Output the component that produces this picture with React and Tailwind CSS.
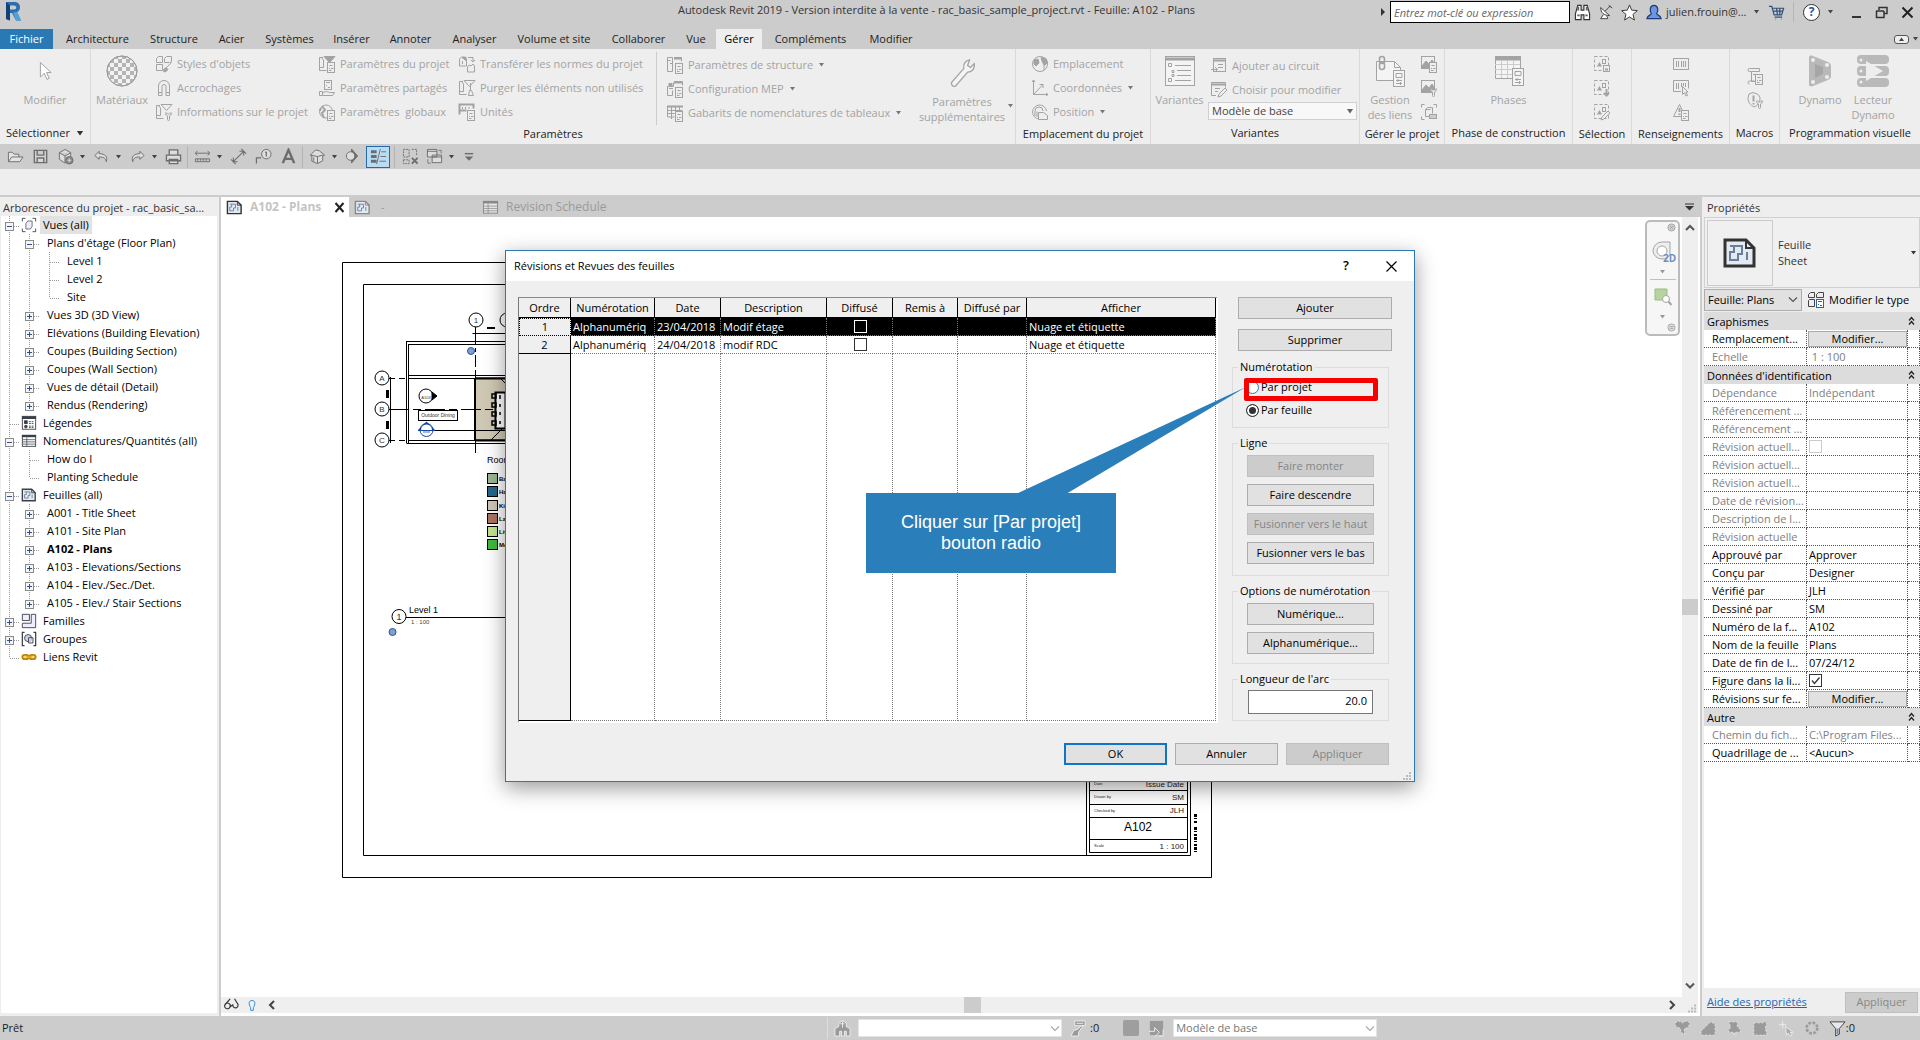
import React from 'react';

/* ---------- small drawing helpers ---------- */

function Svg({ w = 18, h, box = '0 0 18 18', className = '', children }) {
  return (
    <svg width={w} height={h || w} viewBox={box} className={`shrink-0 ${className}`} fill="none" stroke="currentColor" aria-hidden="true">
      {children}
    </svg>
  );
}

function Caret({ className = 'text-[#444]' }) {
  return (
    <svg width="5" height="4" viewBox="0 0 5 4" className={`shrink-0 ${className}`} fill="currentColor" aria-hidden="true">
      <path d="M0 0h5L2.5 3.5z" />
    </svg>
  );
}

function Chevron({ d = 'M1 2.5l4 4 4-4', className = 'text-[#555]', sw = 1.2 }) {
  return (
    <svg width="10" height="10" viewBox="0 0 10 10" className={`shrink-0 ${className}`} fill="none" stroke="currentColor" strokeWidth={sw} aria-hidden="true">
      <path d={d} />
    </svg>
  );
}

// little settings sheet that sits in the corner of many ribbon icons
const corner = (
  <g>
    <rect x="9.5" y="7.5" width="7" height="10" fill="#eee" />
    <path d="M11.5 10.5h3M11 13.5h1M13 13.5h2.500M11 15.500h2.500" />
  </g>
);
const cornerWrench = (
  <path d="M11 9.500a2.500 2.500 0 0 0 1.500 3.500v3.500a1 1 0 0 0 2 0V13A2.500 2.500 0 0 0 16 9.500l-1.500 1.500h-2z" fill="#eee" />
);
const dashedSel = (
  <g>
    <rect x="1.500" y="1.500" width="14" height="14" strokeDasharray="3 2" />
    <path d="M4 11.500l2.500-4.500L9 11.500z" fill="currentColor" stroke="none" />
    <rect x="9.500" y="4.500" width="3" height="4" />
  </g>
);

const ICONS = {
  styles: (
    <g>
      <path d="M1.500 3.500l2-2h4v6h-6zM9.500 3.500l2-2h5v5l-2 1h-5zM1.500 9.500h6v6h-6z" />
      <path d="M16.500 7.500l-6 6M9 17c-1-2 0-4 2-4s3 3-2 4z" fill="currentColor" />
    </g>
  ),
  magnet: <path d="M3.500 16.500V7a5.500 5.500 0 0 1 11 0v9.500h-3.500V7.500a2 2 0 0 0-4 0v9zM3.500 13.500H7M11 13.500h3.500" />,
  info: (
    <g>
      <path d="M5 2.500H1.500v13h7M1.500 12.500H5.500V5l-2-2.500M6 1.500h11l-5.500 6z" />
      {cornerWrench}
    </g>
  ),
  paramProjet: (
    <g>
      <path d="M5 2.500H1.500v13h7M1.500 12.500H5.500V5l-2-2.500" />
      <path d="M6 1.500h11l-5.500 6z" fill="currentColor" />
      {corner}
    </g>
  ),
  shared: (
    <g>
      <rect x="6.500" y="1.500" width="7" height="9" />
      <path d="M8 3.500h4M8 6.500h1M10 8.500h2M1.500 12.500h3v4h-3zM4.500 13.500l4-1 3 1h5l-2 3h-10" />
    </g>
  ),
  global: (
    <g>
      <circle cx="8" cy="8.500" r="6.500" />
      <path d="M4 3l3 4-3 3 2 5M3 5l-1 3" strokeWidth="2" />
      {corner}
    </g>
  ),
  transfer: (
    <g>
      <path d="M1.500 11V4l2-2h4l1 3v6zM4.500 6v3M9.500 17v-5l1.500-2 2 1 2-2 1.500 2v6zM10 2.500h5v4M13 5l2 2 2-2" />
      <path d="M4 2.500h4v3z" fill="currentColor" />
    </g>
  ),
  purge: (
    <g>
      <path d="M5 2.500H1.500v13h7M1.500 12.500H5.500V5l-2-2.500M6 1.500h11l-5.500 6z" />
      <path d="M12.500 4v7M10.500 16.500l1-5h2l2 5z" fill="#eee" />
    </g>
  ),
  units: (
    <g>
      <path d="M1.500 11.500v-10h14v4M1.500 7.500h7" strokeWidth="2" />
      <path d="M4.500 4v2M7.500 4v2M11 4v2" />
      {corner}
    </g>
  ),
  structure: (
    <g>
      <path d="M1.500 1.500h5v14h-5zM1.500 4.500h3M4 7.500h2.500M8 1.500h7.500v4" />
      <path d="M8 2.500h8" strokeWidth="2" />
      {corner}
    </g>
  ),
  mep: (
    <g>
      <path d="M1.500 6.500v9h5v-5M1.500 6.500h6v-4M3 8.500h4M8 1.500h8.500v4" />
      <path d="M8 2.500h8M3.500 3v3M5.500 3v3" strokeWidth="2" />
      {corner}
    </g>
  ),
  schedule: (
    <g>
      <path d="M1 2.500h16" strokeWidth="2" />
      <path d="M1.500 2v11h7M1.500 6.500h15M1.500 9.500h7M5.500 2v13M9.500 2v5M13.500 2v5" />
      {corner}
    </g>
  ),
  globe: (
    <g>
      <circle cx="9" cy="9" r="7.500" />
      <path d="M3 5l4-1 1 4-3 3-2-2zM10 2.500l5 1 1.500 4-3 3-2-3z" fill="currentColor" />
      <path d="M13 10v5" />
    </g>
  ),
  axes: <path d="M2.500 1v14.500H17M2.500 15.500L12 5.500M8.500 5.500H12V9M1 3l1.500-2L4 3M15 14l2 1.500-2 1.500" />,
  position: (
    <g>
      <path d="M8 16A7 7 0 1 1 15.500 8M4 13V8a4 4 0 0 1 8 0M6 14V8.500" />
      <path d="M7.500 9.500h5l4 3v4h-9z" fill="#eee" />
    </g>
  ),
  addSet: (
    <g>
      <rect x="3.500" y="1.500" width="12" height="13" />
      <path d="M3 3.500h13" strokeWidth="2" />
      <path d="M8 7.500h5M8 10.500h5M1 12.500h6M5 10l2.500 2.500L5 15" />
    </g>
  ),
  pickEdit: (
    <g>
      <path d="M6 14.500H1.500v-13h14v5M5 7.500h5M5 10.500h3" />
      <path d="M1 3.500h15" strokeWidth="2" />
      <path d="M8 16l1-3 6-6 2 2-6 6z" fill="#eee" />
    </g>
  ),
  image: (
    <g>
      <rect x="1.500" y="1.500" width="13" height="12" />
      <path d="M2 11l4-5 3 3 3-4 2 3v5H2z" fill="currentColor" />
      {corner}
    </g>
  ),
  imageWrench: (
    <g>
      <rect x="1.500" y="1.500" width="13" height="12" />
      <path d="M2 11l4-5 3 3 3-4 2 3v5H2z" fill="currentColor" />
      {cornerWrench}
    </g>
  ),
  frame: (
    <g>
      <path d="M4.500 1.500h-3v3M13.500 1.500h3v3M1.500 13.500v3h3M5.500 6.500l2-2h5v6M5.500 6.500v7h4M5.500 6.500h5" />
      <rect x="9.500" y="11.500" width="7" height="4" fill="#ccc" />
    </g>
  ),
  selSave: (
    <g>
      {dashedSel}
      <rect x="10.500" y="10.500" width="6" height="6" fill="#eee" />
      <path d="M12 14.500h3" strokeWidth="2" />
    </g>
  ),
  selLoad: (
    <g>
      {dashedSel}
      <path d="M13.500 10v6M11 14l2.500 2.500L16 14" strokeWidth="2" />
    </g>
  ),
  selEdit: (
    <g>
      {dashedSel}
      <path d="M8 17l1-3 6-6 2 2-6 6z" fill="#eee" />
    </g>
  ),
  barcode: (
    <g>
      <rect x="1.500" y="3.500" width="15" height="11" />
      <path d="M4.500 6v6M6.500 6v6M9.500 6v6M11.500 6v6M13.500 6v6" />
    </g>
  ),
  barcodePick: (
    <g>
      <path d="M9 12.500H1.500v-11h15v8M4.500 4v6M6.500 4v6M9.500 4v4M11.500 4v3M13.500 4v4" />
      <path d="M10.500 7.500v8l2-2 1.500 3.500 1.500-.500-1.500-3.500h2z" fill="#eee" />
    </g>
  ),
  warning: (
    <g>
      <path d="M1.500 13.500l6-12 6 12z" />
      <path d="M7.500 5v4M7.500 10.500v1.500" strokeWidth="2" />
      {corner}
    </g>
  ),
  macro: (
    <g>
      <path d="M3.500 1.500h10v3h-8v10h4M3.500 1.500a1.500 1.500 0 0 0 0 3h2M3.500 17a1.500 1.500 0 0 1 0-3h5M7 7.500h3" />
      {corner}
    </g>
  ),
  macroSafe: (
    <g>
      <path d="M3 3l4-1.500L11 3c2 1 3 2 3 5 0 4-3 7-6 8-4-2-6-5-6-9z" />
      <path d="M7.500 4.500v6M7.500 12v1.500" strokeWidth="2" />
      {cornerWrench}
    </g>
  ),
  sheet: (
    <g>
      <path d="M1.500 2.500h10.500l4 4v9H1.500z" fill="#e4eaf2" strokeWidth="1.500" />
      <path d="M12 2.500v4h4" />
      <path d="M4 5.500h6v4h-2v3h-4v-4h2v-3M12.500 8.500v4" stroke="#6b7f99" />
    </g>
  ),
  table: (
    <g>
      <rect x="1.500" y="2.500" width="15" height="12.500" fillOpacity=".5" fill="#fff" />
      <path d="M1 3.500h16" strokeWidth="2.500" />
      <path d="M2 7.500h14M2 10h14M2 12.500h14M6.500 5v10" strokeWidth=".8" />
    </g>
  ),
  legend: (
    <g>
      <rect x="1.500" y="1.500" width="15" height="14.500" fill="#fff" />
      <path d="M1 3h16" strokeWidth="3" />
      <rect x="4" y="6.500" width="3" height="3" fill="currentColor" />
      <circle cx="5.500" cy="13" r="1.500" fill="currentColor" />
      <path d="M9 7.500h6M9 9.500h6M9 12.500h6M9 14h6" strokeDasharray="2 1" />
    </g>
  ),
  views: (
    <g>
      <path d="M5 1.500H1.500V5M13 1.500h3.500V5M1.500 13v3.500H5M13 16.500h3.500V13" />
      <path d="M5.500 7.500l2-3h5v6l-2 3h-5z" fill="#eef" stroke="#666" />
    </g>
  ),
  family: (
    <g>
      <path d="M1.500 1.500h8v7h-8zM11.500 1.500h5v15h-15v-5h10z" fill="#eef" />
    </g>
  ),
  group: (
    <g>
      <path d="M4 1.500H1.500v15H4M14 1.500h2.500v15H14" strokeWidth="1.400" />
      <circle cx="8" cy="8" r="4" fill="#cfd6e2" />
      <path d="M8.500 7.500h5v6h-5z" fill="#dfe5ee" fillOpacity=".7" />
    </g>
  ),
  link: (
    <g stroke="#b8860b" strokeWidth="2">
      <rect x="1.500" y="6.500" width="7" height="5" rx="2.500" fill="#f6d66b" />
      <rect x="9.500" y="6.500" width="7" height="5" rx="2.500" fill="#f6d66b" />
      <path d="M6 9h6" stroke="#e0a91e" />
    </g>
  ),
};

function Icon({ name, w = 18, className = '' }) {
  return (
    <Svg w={w} className={className}>
      {ICONS[name]}
    </Svg>
  );
}

/* ---------- title bar and tabs ---------- */

function TitleBar() {
  return (
    <header className="flex h-[29px] items-start bg-[#ccc] text-[#333]">
      <div className="w-[492px] shrink-0 pl-[5px] pt-[2px]">
        <svg width="16" height="19" viewBox="0 0 16 19" aria-label="Revit">
          <path d="M1 0h8c4 0 6 2 6 5.500 0 2.500-1.500 4-3 4.500l4 8.500H11L7 11H5v7.500L1 17z" fill="#2a6fb0" />
          <path d="M5 3.500h4c3 0 3 4 0 4H5z" fill="#ccc" />
          <path d="M1 0l4 3.500v15L1 17z" fill="#143f78" />
          <path d="M8 10.500l3 8h5l-4-8.500z" fill="#4fa3dc" />
        </svg>
      </div>
      <h1 className="min-w-0 flex-1 truncate text-center leading-[20px]">
        Autodesk Revit 2019 - Version interdite à la vente - rac_basic_sample_project.rvt - Feuille: A102 - Plans
      </h1>
      <div className="flex h-[24px] shrink-0 items-center pr-[6px]">
        <svg width="4" height="8" viewBox="0 0 4 8" className="mr-[5px]"><path d="M0 0l4 4-4 4z" fill="#333" /></svg>
        <input
          aria-label="Recherche"
          placeholder="Entrez mot-clé ou expression"
          className="h-[22px] w-[180px] border border-black bg-white px-[3px] italic outline-none placeholder:text-[#666]"
        />
        <button aria-label="Rechercher" className="ml-[4px]">
          <Svg w={17}>
            <path d="M4 1.500h3.500v5h3v-5H14l2.500 9v6h-6v-5h-3v5h-6v-6z" fill="#fff" stroke="#333" strokeWidth="1.200" />
            <path d="M3.500 12h2.500M12 12h2.500M4.500 3v4M13.500 3v4" stroke="#566" strokeWidth="2" />
          </Svg>
        </button>
        <button aria-label="Centre de communication" className="ml-[7px]">
          <Svg w={16}><path d="M3 4c0 6 4 9 10 9zM8 8l6-6M12 1.500l4 3M6 12l-3 4.500h8l-1-3" fill="#fff" stroke="#333" /></Svg>
        </button>
        <button aria-label="Favoris" className="ml-[7px]">
          <Svg w={17}><path d="M9 1l2.300 5.500 6 .500-4.600 4 1.500 6L9 13.700 3.800 17l1.500-6-4.600-4 6-.500z" fill="#fff" stroke="#333" /></Svg>
        </button>
        <button className="ml-[8px] flex items-center">
          <Svg w={16} className="mr-[4px]"><path d="M6 11C4 8 4 1.500 9 1.500S14 8 12 11c0 1.500 4 1 5 5.500H1C2 12 6 12.500 6 11z" fill="#6f94e0" stroke="#1d3c7c" strokeWidth="1.400" /></Svg>
          <span className="w-[88px] text-left">julien.frouin@...</span>
          <Caret />
        </button>
        <button aria-label="App Store" className="ml-[9px]">
          <Svg w={17}><path d="M1 2.500h3l2.500 9h8l2-7H5M7 14h8M8 16h.500M14 16h.500M6 7.500h9M9 5l1 6M12.500 5v6" stroke="#34507c" strokeWidth="1.300" /></Svg>
        </button>
        <span className="ml-[8px] h-[20px] w-px bg-[#b5b5b5]" />
        <button aria-label="Aide" className="ml-[9px] flex items-center gap-[8px]">
          <span className="flex h-[17px] w-[17px] items-center justify-center rounded-full border border-[#333] bg-white text-[12px] font-bold text-[#2453a6]">?</span>
          <Caret />
        </button>
        <button aria-label="Réduire" className="ml-[19px] h-[12px] w-[9px] border-b-2 border-[#333]" />
        <button aria-label="Restaurer" className="ml-[14px]">
          <Svg w={13} box="0 0 13 13"><path d="M4 4V1.500h8v6H9.500M1 5h8M1.500 5v6.500H9V5" stroke="#333" strokeWidth="1.500" /></Svg>
        </button>
        <button aria-label="Fermer" className="ml-[13px]">
          <Svg w={13} box="0 0 13 13"><path d="M1.500 1.500l10 10M11.500 1.500l-10 10" stroke="#222" strokeWidth="2" /></Svg>
        </button>
      </div>
    </header>
  );
}

const TABS = [
  ['Architecture', 'w-[85px]'],
  ['Structure', 'w-[68px]'],
  ['Acier', 'w-[47px]'],
  ['Systèmes', 'w-[69px]'],
  ['Insérer', 'w-[55px]'],
  ['Annoter', 'w-[63px]'],
  ['Analyser', 'w-[65px]'],
  ['Volume et site', 'w-[94px]'],
  ['Collaborer', 'w-[75px]'],
  ['Vue', 'w-[40px]'],
  ['Gérer', 'w-[46px]'],
  ['Compléments', 'w-[97px]'],
  ['Modifier', 'w-[64px]'],
];

function TabBar() {
  return (
    <nav className="flex h-[20px] bg-[#ccc] text-[#222]">
      <button className="mr-[2px] w-[53px] bg-[#2a79b5] text-white">Fichier</button>
      {TABS.map(([label, width]) => (
        <button key={label} className={`${width} shrink-0 whitespace-nowrap ${label === 'Gérer' ? 'bg-[#eee] text-black' : ''}`}>
          {label}
        </button>
      ))}
      <button aria-label="Réduire le ruban" className="ml-auto flex items-center gap-[4px] pr-[2px]">
        <span className="flex h-[9px] w-[15px] items-center justify-center rounded-[3px] border border-[#555] bg-[#eee]">
          <Caret className="rotate-180 text-[#444]" />
        </span>
        <Caret />
      </button>
    </nav>
  );
}

/* ---------- ribbon ---------- */

function Panel({ title, width, children, last }) {
  return (
    <section className={`flex shrink-0 flex-col ${width} ${last ? '' : 'border-r border-[#dadada]'}`}>
      <div className="flex flex-1 pt-[3px] text-[#a3a3a3]">{children}</div>
      <h2 className="flex h-[22px] items-center justify-center gap-[6px] whitespace-nowrap text-[#222]">{title}</h2>
    </section>
  );
}

function Small({ icon, label, caret }) {
  return (
    <button disabled aria-label={label || icon} className="flex h-[24px] items-center gap-[4px] whitespace-nowrap">
      <Icon name={icon} />
      {label && <span>{label}</span>}
      {caret && <Caret className="ml-[2px] text-[#777]" />}
    </button>
  );
}

function Large({ children, label, width = '' }) {
  return (
    <button disabled className={`flex flex-col items-center pt-[3px] leading-[15px] ${width}`}>
      <span className="mb-[5px] flex h-[32px] items-center">{children}</span>
      {label.split('|').map((line) => (
        <span key={line} className="whitespace-nowrap">{line}</span>
      ))}
    </button>
  );
}

function Checker() {
  const cells = [];
  for (let r = 0; r < 8; r += 1) {
    for (let c = 0; c < 8; c += 1) {
      if ((r + c) % 2 === 0) cells.push(<rect key={`${r}-${c}`} x={c * 4} y={r * 4} width="4" height="4" fill="#b4b4b4" stroke="none" />);
    }
  }
  return (
    <Svg w={32} box="0 0 32 32">
      <clipPath id="ball"><circle cx="16" cy="16" r="15" /></clipPath>
      <circle cx="16" cy="16" r="15" fill="#f2f2f2" />
      <g clipPath="url(#ball)">{cells}</g>
      <circle cx="16" cy="16" r="15" stroke="#999" />
    </Svg>
  );
}

function Ribbon() {
  return (
    <div className="flex h-[95px] bg-[#eee]">
      <Panel title={<>Sélectionner <Caret className="h-[5px] w-[8px] text-[#333]" /></>} width="w-[91px]">
        <Large label="Modifier" width="w-full">
          <Svg w={20} box="0 0 20 26"><path d="M4 2v19l5-5 3.500 8 3-1.500L12 15h6z" strokeWidth="1.300" fill="#fff" /></Svg>
        </Large>
      </Panel>

      <Panel title="Paramètres" width="min-w-0 flex-1">
        <Large label="Matériaux" width="w-[62px]"><Checker /></Large>
        <div className="w-[163px] pl-[2px]">
          <Small icon="styles" label="Styles d'objets" />
          <Small icon="magnet" label="Accrochages" />
          <Small icon="info" label="Informations sur le projet" />
        </div>
        <div className="w-[140px] pl-[2px]">
          <Small icon="paramProjet" label="Paramètres du projet" />
          <Small icon="shared" label="Paramètres partagés" />
          <Small icon="global" label="Paramètres&nbsp; globaux" />
        </div>
        <div className="w-[200px] pl-[2px]">
          <Small icon="transfer" label="Transférer les normes du projet" />
          <Small icon="purge" label="Purger les éléments non utilisés" />
          <Small icon="units" label="Unités" />
        </div>
        <div className="w-[260px] border-l border-[#ccc] pl-[9px] pt-px">
          <Small icon="structure" label="Paramètres de structure" caret />
          <Small icon="mep" label="Configuration MEP" caret />
          <Small icon="schedule" label="Gabarits de nomenclatures de tableaux" caret />
        </div>
        <div className="flex items-center">
          <Large label="Paramètres|supplémentaires" width="w-[92px]">
            <Svg w={30} box="0 0 30 32"><path d="M17 11c-1-4 1-8 6-9l-2 6 3 2 4-4c1 6-3 9-7 9L8 30c-3 1-5-2-4-4z" strokeWidth="1.400" fill="#f4f4f4" /></Svg>
          </Large>
          <Caret className="mt-[34px] text-[#777]" />
        </div>
      </Panel>

      <Panel title="Emplacement du projet" width="w-[135px]">
        <div className="pl-[15px]">
          <Small icon="globe" label="Emplacement" />
          <Small icon="axes" label="Coordonnées" caret />
          <Small icon="position" label="Position" caret />
        </div>
      </Panel>

      <Panel title="Variantes" width="w-[209px]">
        <Large label="Variantes" width="w-[57px]">
          <Svg w={32} box="0 0 32 32">
            <rect x="1.500" y="1.500" width="29" height="29" fill="#f4f4f4" />
            <path d="M1 4h30" strokeWidth="3" />
            <path d="M4.500 8.500h3v3h-3zM4.500 23.500h3v3h-3zM8 15.500h2v2H8zM8 19.500h2v2H8zM11 10.500h16M13 15.500h14M13 20.500h14M11 25.500h16" />
          </Svg>
        </Large>
        <div className="flex flex-1 flex-col pr-[2px] pt-[2px]">
          <div className="pl-[2px]">
            <Small icon="addSet" label="Ajouter au circuit" />
            <Small icon="pickEdit" label="Choisir pour modifier" />
          </div>
          <div className="relative">
            <select aria-label="Variante active" className="h-[18px] w-full appearance-none border border-[#d0d0d0] bg-[#f8f8f8] px-[3px] leading-[16px] text-[#444]">
              <option>Modèle de base</option>
            </select>
            <Caret className="pointer-events-none absolute right-[3px] top-[7px] h-[5px] w-[8px] text-[#666]" />
          </div>
        </div>
      </Panel>

      <Panel title="Gérer le projet" width="w-[85px]">
        <Large label="Gestion|des liens" width="w-[60px]">
          <Svg w={32} box="0 0 32 32">
            <path d="M2.500 6.500h18l6 6v13h-24z" fill="#f4f4f4" />
            <path d="M20.500 6.500v6h6" />
            <rect x="5.500" y="1.500" width="5" height="7" rx="2.500" strokeWidth="1.600" />
            <rect x="5.500" y="7.500" width="5" height="7" rx="2.500" strokeWidth="1.600" />
            <rect x="19.500" y="15.500" width="11" height="16" fill="#f4f4f4" />
            <path d="M22 18.500h6v4h-6zM22 25.500h6M22 28.500h6M24 24v3M26.500 27v3" />
          </Svg>
        </Large>
        <div className="flex flex-col">
          <Small icon="image" />
          <Small icon="imageWrench" />
          <Small icon="frame" />
        </div>
      </Panel>

      <Panel title="Phase de construction" width="w-[128px]">
        <Large label="Phases" width="w-full">
          <Svg w={32} box="0 0 32 32">
            <path d="M2.500 1.500h25v22h-25z" fill="#f4f4f4" />
            <path d="M2 3.500h26" strokeWidth="4" />
            <path d="M2 9.500h25M2 14.500h25M2 19.500h25M8.500 5v18M14.500 5v18M20.500 5v18" stroke="#ccc" />
            <rect x="19.500" y="13.500" width="11" height="17" fill="#f4f4f4" />
            <path d="M22 16.500h6v4h-6zM22 24.500h6M22 27.500h6M24 23v3M26.500 26v3" />
          </Svg>
        </Large>
      </Panel>

      <Panel title="Sélection" width="w-[59px]">
        <div className="flex w-full flex-col items-center">
          <Small icon="selSave" />
          <Small icon="selLoad" />
          <Small icon="selEdit" />
        </div>
      </Panel>

      <Panel title="Renseignements" width="w-[98px]">
        <div className="flex w-full flex-col items-center">
          <Small icon="barcode" />
          <Small icon="barcodePick" />
          <Small icon="warning" />
        </div>
      </Panel>

      <Panel title="Macros" width="w-[50px]">
        <div className="flex w-full flex-col items-center pt-[12px]">
          <Small icon="macro" />
          <Small icon="macroSafe" />
        </div>
      </Panel>

      <Panel title="Programmation visuelle" width="w-[140px]" last>
        <div className="flex gap-[5px] pl-[16px]">
          <Large label="Dynamo" width="w-[48px]">
            <Svg w={28} h={32} box="0 0 28 32">
              <path d="M3 2c0-1 2-2 4-1l15 6c2 1 3 2 3 4v10c0 2-1 3-3 4L7 31c-2 1-4 0-4-1z" fill="#b9b9b9" stroke="none" />
              <path d="M9 9l8 3v7l-8 4z" fill="#a6a6a6" stroke="none" />
              <g fill="#eee" stroke="none"><circle cx="7" cy="5" r="2" /><circle cx="21" cy="10" r="2" /><circle cx="21" cy="22" r="2" /><circle cx="7" cy="27" r="2" /></g>
            </Svg>
          </Large>
          <Large label="Lecteur|Dynamo" width="w-[48px]">
            <Svg w={32} box="0 0 32 32">
              <g fill="#b9b9b9" stroke="none"><rect y="0" width="32" height="9" rx="4" /><rect y="11" width="32" height="10" rx="4" /><rect y="23" width="32" height="9" rx="4" /></g>
              <path d="M9 6l17 10L9 26z" fill="#eee" stroke="none" />
              <g fill="#eee" stroke="none"><circle cx="4" cy="5" r="1.500" /><circle cx="4" cy="16" r="1.500" /><circle cx="4" cy="27" r="1.500" /></g>
            </Svg>
          </Large>
        </div>
      </Panel>
    </div>
  );
}

/* ---------- quick access toolbar ---------- */

function Tool({ label, caret, active, children }) {
  return (
    <button
      aria-label={label}
      className={`flex h-[22px] shrink-0 items-center justify-center gap-[6px] ${active ? 'w-[24px] border border-[#2469a8] bg-[#b9dcf5]' : ''}`}
    >
      <Svg w={17}>{children}</Svg>
      {caret && <Caret />}
    </button>
  );
}

function Divider() {
  return <span className="h-[22px] w-px bg-[#b4b4b4]" />;
}

function QuickAccess() {
  return (
    <div className="flex h-[25px] items-center bg-[#ccc] pl-[7px] text-[#6d6d6d]">
      <div className="flex w-[180px] items-center gap-[8px]">
        <Tool label="Ouvrir"><path d="M1.500 14V4.500h4l2 2h5v3M1.500 14.500L5 9.500h12l-3.500 5z" fill="#e4e4e4" /></Tool>
        <Tool label="Enregistrer"><path d="M2.500 2.500h13v13h-13zM5.500 2.500v5h7v-5M5.500 15.500v-5h7v5" fill="#d8d8d8" strokeWidth="1.500" /></Tool>
        <Tool label="Synchroniser" caret>
          <path d="M2.500 5l6-3.500 6 3.500v7l-6 4-6-4zM8.500 8.500v7M2.500 5l6 3.500 6-3.500" fill="#ddd" />
          <circle cx="13" cy="13" r="4" fill="#8a8a8a" />
          <path d="M11 13h4M13 11v4" stroke="#ddd" />
        </Tool>
        <Tool label="Annuler" caret><path d="M6.500 3.500L2 8l4.500 4V9.500c5 0 6.500 1 7.500 5 2-5-1-8.500-7.500-8.500z" fill="#ddd" /></Tool>
        <Tool label="Rétablir" caret><path d="M11.500 3.500L16 8l-4.500 4V9.500c-5 0-6.500 1-7.500 5-2-5 1-8.500 7.500-8.500z" fill="#ddd" /></Tool>
        <Tool label="Imprimer"><path d="M4.500 7v-5h9v5M1.500 7.500h15v6h-15zM4.500 12h9v4.500h-9z" fill="#ddd" strokeWidth="1.400" /></Tool>
      </div>
      <Divider />
      <div className="flex w-[114px] items-center gap-[8px] pl-[6px]">
        <Tool label="Mesurer" caret><path d="M1.500 5.500h15M3.500 3l-2 2.500 2 2.500M14.500 3l2 2.500-2 2.500M1.500 11.500h15v3h-15zM4 11.500v2M7 11.500v2M10 11.500v2M13 11.500v2" /></Tool>
        <Tool label="Cote alignée"><path d="M4 14L14 4M10 3.500h4.500V8M3.500 10v4.500H8M1 12l5 5M12 1l5 5" strokeWidth="1.100" /></Tool>
        <Tool label="Etiquette"><circle cx="12" cy="6.500" r="5" fill="#ddd" /><path d="M1.500 16.500v-6h5M12 4v5M11 5l1-1" strokeWidth="1.300" /></Tool>
        <Tool label="Texte"><path d="M3 16L9 2l6 14M5.500 11.500h7" strokeWidth="2.600" /></Tool>
      </div>
      <Divider />
      <div className="flex w-[91px] items-center gap-[6px] pl-[6px]">
        <Tool label="Vue 3D" caret><path d="M1.500 7.500L7 2l4 1 5.500 4.500-2 .500v5.500l-5.500 3-6-2.500V8zM9 16V9l5.500-1.500M1.500 7.500L9 9M5 14v-4" fill="#ddd" /></Tool>
        <Tool label="Coupe"><path d="M9 1l6.500 7.500L9 16z" fill="currentColor" /><circle cx="8" cy="8.500" r="4.500" fill="#ddd" /></Tool>
        <Tool label="Lignes fines" active><path d="M1 4h6M1 9h6M1 14h6" strokeWidth="3" /><path d="M7 17l4-16M12 4h5M11 9h6M10 14h7" /></Tool>
      </div>
      <Divider />
      <div className="flex items-center gap-[7px] pl-[7px]">
        <Tool label="Fermer les vues"><path d="M1.500 1.500h6v8h-6zM10.500 1.500h5v6M1.500 12.500h6v4h-6z" strokeDasharray="2 1" /><path d="M10.500 10.500l6 6M16.500 10.500l-6 6" strokeWidth="2" /></Tool>
        <Tool label="Changer de fenêtre" caret><path d="M1.500 1.500h10v8h-10zM1.500 3.500h10M6.500 7.500h10v8h-10zM6.500 9.500h10M13.500 2.500h2.500v3M2 12v4h3" fill="#ddd" /></Tool>
        <Tool label="Personnaliser"><path d="M4 6h9" strokeWidth="1.500" /><path d="M4 9h9l-4.500 4.500z" fill="currentColor" stroke="none" /></Tool>
      </div>
    </div>
  );
}

/* ---------- project browser ---------- */

// guides: one letter per column ( | pass, t tee, e elbow, + / - boxes, q last box )
const TREE = [
  { g: '-', icon: 'views', label: 'Vues (all)', selected: true },
  { g: '|-', label: "Plans d'étage (Floor Plan)" },
  { g: '||t', label: 'Level 1' },
  { g: '||t', label: 'Level 2' },
  { g: '||e', label: 'Site' },
  { g: '|+', label: 'Vues 3D (3D View)' },
  { g: '|+', label: 'Elévations (Building Elevation)' },
  { g: '|+', label: 'Coupes (Building Section)' },
  { g: '|+', label: 'Coupes (Wall Section)' },
  { g: '|+', label: 'Vues de détail (Detail)' },
  { g: '|q', label: 'Rendus (Rendering)' },
  { g: 't', icon: 'legend', label: 'Légendes' },
  { g: '-', icon: 'table', label: 'Nomenclatures/Quantités (all)' },
  { g: '|t', label: 'How do I' },
  { g: '|e', label: 'Planting Schedule' },
  { g: '-', icon: 'sheet', label: 'Feuilles (all)' },
  { g: '|+', label: 'A001 - Title Sheet' },
  { g: '|+', label: 'A101 - Site Plan' },
  { g: '|+', label: 'A102 - Plans', bold: true },
  { g: '|+', label: 'A103 - Elevations/Sections' },
  { g: '|+', label: 'A104 - Elev./Sec./Det.' },
  { g: '|q', label: 'A105 - Elev./ Stair Sections' },
  { g: '+', icon: 'family', label: 'Familles' },
  { g: '+', icon: 'group', label: 'Groupes' },
  { g: 'e', icon: 'link', label: 'Liens Revit' },
];

function Guide({ kind }) {
  const ends = kind === 'e' || kind === 'q';
  const boxed = '+-q'.includes(kind);
  return (
    <Svg w={20} h={18} box="0 0 20 18">
      <g stroke="#999" strokeDasharray="1 1">
        <path d={ends ? 'M8.500 0v10' : 'M8.500 0v18'} />
        {kind !== '|' && <path d="M9 10.500h10" />}
      </g>
      {boxed && (
        <g>
          <rect x="4.500" y="6.500" width="8" height="8" fill="#f5f5f5" stroke="#8a8a8a" />
          <path d={kind === '-' ? 'M6 10.500h5' : 'M6 10.500h5M8.500 8v5'} stroke="#334f8c" />
        </g>
      )}
    </Svg>
  );
}

function ProjectBrowser() {
  return (
    <aside className="flex w-[219px] shrink-0 flex-col bg-[#eee]">
      <h2 className="h-[19px] truncate px-[3px] leading-[21px] text-[#333]">Arborescence du projet - rac_basic_sa...</h2>
      <ul className="mb-[3px] ml-px mr-[2px] flex-1 bg-white">
        {TREE.map((row) => (
          <li key={row.label} className="flex h-[18px] items-center">
            {row.g.split('').map((kind, i) => <Guide key={i} kind={kind} />)}
            {row.icon && <Icon name={row.icon} w={16} className="text-[#3a3f48]" />}
            <span
              className={`whitespace-nowrap leading-[18px] ${row.icon ? 'ml-[3px] px-[3px]' : 'ml-[6px]'} ${row.selected ? 'bg-[#e2e2e2]' : ''} ${row.bold ? 'font-bold' : ''}`}
            >
              {row.label}
            </span>
          </li>
        ))}
      </ul>
    </aside>
  );
}

/* ---------- drawing area ---------- */

function ViewTabs() {
  return (
    <div className="flex h-[20px] bg-[#ccc] text-[#9a9a9a]">
      <div className="flex w-[128px] items-center bg-white pl-[5px] text-[12px] font-bold text-[#c4c4c4]">
        <Icon name="sheet" w={17} className="text-[#333]" />
        <span className="ml-[7px]">A102 - Plans</span>
        <button aria-label="Fermer l'onglet" className="ml-auto mr-[4px]">
          <Svg w={11} box="0 0 11 11"><path d="M1.500 1l8 9M9.500 1l-8 9" stroke="#222" strokeWidth="2" /></Svg>
        </button>
      </div>
      <div className="flex w-[128px] items-center pl-[5px]">
        <Icon name="sheet" w={17} className="text-[#888]" />
        <span className="ml-[10px]">-</span>
      </div>
      <div className="flex items-center pl-[5px] text-[12px]">
        <Icon name="table" w={17} className="text-[#888]" />
        <span className="ml-[7px]">Revision Schedule</span>
      </div>
      <button aria-label="Liste des vues" className="ml-auto mr-[6px]">
        <Svg w={9} h={8} box="0 0 9 8"><path d="M0 1h9" stroke="#333" /><path d="M0 3h9L4.500 7.500z" fill="#333" stroke="none" /></Svg>
      </button>
    </div>
  );
}

const LEGEND = [
  ['#9cb594', 473, 'Ba'],
  ['#24688c', 486, 'Ha'],
  ['#cfc8b4', 500, 'Ki'],
  ['#ab7562', 513, 'La'],
  ['#c3e58e', 526, 'Liv'],
  ['#3fba3f', 539, 'Me'],
];

function Bubble({ x, y, r = 7, t, size = 8 }) {
  return (
    <g>
      <circle cx={x} cy={y} r={r} fill="#fff" />
      <text x={x} y={y + 3} fontSize={size} textAnchor="middle" fill="#333" stroke="none">{t}</text>
    </g>
  );
}

function SheetDrawing() {
  return (
    <svg width="872" height="618" viewBox="341 261 872 618" className="absolute left-[120px] top-[44px] font-['Liberation_Sans',sans-serif]" fill="none" stroke="#000">
      <path d="M342.500 262.500h869v615h-869zM363.500 284.500h827v571h-827z" />
      {/* plan of level 1 */}
      <path d="M472.500 333.500h40M475.500 327v10" />
      <path d="M475.500 333v120" strokeDasharray="12 3 4 3" />
      <path d="M475.500 370v83" />
      <path d="M406.500 341.500h120M408.500 344.500h120M406.500 341v102M408.500 344v99M406.500 443.500h120M408.500 375.500h120M408.500 378.500h120M408.500 440.500h120" />
      <path d="M389 378.500h20M389 440.500h20" strokeDasharray="6 4" />
      <path d="M475 378h52v62h-52z" fill="#cfc8b4" />
      <path d="M475 378v62M475 378.500h52M475 440.500h52" strokeWidth="2" />
      <path d="M389 409.500h138" strokeDasharray="20 4 8 4" />
      <path d="M434 430.500h76M390.500 377v66M500 378l8 8M491 440l16-16" />
      <rect x="495.500" y="392.500" width="10" height="36" fill="#fff" strokeWidth="2" />
      <path d="M492 394h4v4h-4zM492 403h4v4h-4zM492 412h4v4h-4zM492 421h4v4h-4zM500 395v4M500 404v3M500 412v3M500 421v3" strokeWidth="1.500" />
      <path d="M386 390h3v8h-3zM386 421h3v8h-3zM487 327h8v2h-8z" fill="#000" stroke="none" />
      <Bubble x={476} y={320} t="1" />
      <Bubble x={507} y={320} t="2" />
      <Bubble x={382} y={378} t="A" />
      <Bubble x={382} y={409} t="B" />
      <Bubble x={382} y={440} t="C" />
      <Bubble x={426} y={396} t="A103" size={4} />
      <path d="M432 392l5 4-5 4z" fill="#000" />
      <rect x="418.500" y="410.500" width="39" height="10" fill="#fff" />
      <text x="438" y="417" fontSize="5" textAnchor="middle" fill="#333" stroke="none">Outdoor Dining</text>
      <circle cx="426.500" cy="430" r="6.500" fill="#fff" stroke="#1845a0" />
      <path d="M418 430l8.500-8.500L435 430z" fill="#1845a0" stroke="none" />
      <path d="M421 430a5.500 5.500 0 0 1 11 0z" fill="#fff" stroke="none" />
      <path d="M423 430h7v3h-7z" fill="#9db8e8" stroke="none" />
      <path d="M418 430.500h17" stroke="#1845a0" />
      <circle cx="471" cy="351" r="3.500" fill="#7f9fd0" stroke="#2d5596" />
      <circle cx="392.500" cy="632" r="3.500" fill="#7f9fd0" stroke="#2d5596" />
      <text x="487" y="463" fontSize="9" fill="#000" stroke="none">Room Legend</text>
      {LEGEND.map(([fill, y, t]) => (
        <g key={t}>
          <rect x="487.500" y={y + 0.5} width="10" height="10" fill={fill} />
          <text x="499" y={y + 8} fontSize="6" fontWeight="bold" fill="#000" stroke="none">{t}</text>
        </g>
      ))}
      <Bubble x={399} y={616.500} t="1" size={9} />
      <path d="M406 617.500h100" />
      <text x="409" y="613" fontSize="9" fill="#000" stroke="none">Level 1</text>
      <text x="411" y="624" fontSize="6" fill="#444" stroke="none">1 : 100</text>
      {/* title block */}
      <path d="M1086.500 770v85M1089.500 770v82.500h98V770M1089.500 790.500h98M1089.500 804.500h98M1089.500 817.500h98M1089.500 839.500h98" />
      <g fill="#222" stroke="none" fontSize="4">
        <text x="1094" y="785">Date</text>
        <text x="1094" y="798">Drawn by</text>
        <text x="1094" y="812">Checked by</text>
        <text x="1094" y="847">Scale</text>
      </g>
      <g fill="#222" stroke="none" fontSize="8" textAnchor="end">
        <text x="1184" y="787">Issue Date</text>
        <text x="1184" y="800">SM</text>
        <text x="1184" y="813">JLH</text>
        <text x="1184" y="849">1 : 100</text>
      </g>
      <text x="1138" y="831" fontSize="12" textAnchor="middle" fill="#000" stroke="none">A102</text>
      <path d="M1195.500 814v10M1195.500 827v26" strokeWidth="3" strokeDasharray="3 1 1 2 2 1" />
    </svg>
  );
}

function NavBar() {
  return (
    <div className="absolute right-[2px] top-[3px] flex h-[116px] w-[35px] flex-col items-center rounded-[5px] border-2 border-[#bbb] bg-[#f6f6f6] text-[#a5a5a5]">
      <Svg w={9} box="0 0 10 10" className="mr-[2px] mt-px self-end"><circle cx="5" cy="5" r="4" fill="#ccc" /><path d="M3.500 3.500l3 3M6.500 3.500l-3 3" /></Svg>
      <Svg w={26} h={26} box="0 0 26 26" className="mt-[7px]">
        <path d="M3 12a9 9 0 0 1 9-9h8v12c-1 3-4 5-8 5a9 9 0 0 1-9-8z" fill="#eee" />
        <circle cx="12" cy="12" r="5" fill="#fff" />
        <text x="13" y="23" fontSize="10" fontWeight="bold" fill="#6a90be" stroke="none">2D</text>
      </Svg>
      <Caret className="mt-[5px] text-[#999]" />
      <span className="mt-[5px] h-px w-[26px] bg-[#c0c0c0]" />
      <Svg w={18} className="mt-[8px]">
        <path d="M1 1h12v11H1z" fill="#b7d3a0" stroke="#9bbb84" />
        <circle cx="12" cy="11" r="3.500" fill="#fff" /><path d="M14.500 13.500l3 3.500" strokeWidth="2" />
      </Svg>
      <Caret className="mt-[9px] text-[#999]" />
      <Svg w={9} box="0 0 10 10" className="mb-[2px] mr-[2px] mt-auto self-end"><circle cx="5" cy="5" r="4" fill="#ddd" /><path d="M3 4h4M3 6h4" /></Svg>
    </div>
  );
}

function DrawingArea() {
  return (
    <main className="flex min-w-0 flex-1 flex-col border-x-[2px] border-[#ccc] bg-white">
      <ViewTabs />
      <div className="flex min-h-0 flex-1">
        <div className="relative min-w-0 flex-1 overflow-hidden">
          <SheetDrawing />
          <NavBar />
        </div>
        <div className="mr-[2px] flex w-[16px] flex-col items-center bg-[#efefef] py-[6px]">
          <Chevron d="M1 7l4-4 4 4" sw={2} />
          <span className="flex-1" />
          <span className="h-[16px] w-full bg-[#ccc]" />
          <span className="flex-1" />
          <Chevron sw={2} />
        </div>
      </div>
      <div className="mb-[3px] mr-[2px] flex h-[16px] items-center bg-[#efefef] pl-[2px]">
        <Svg w={16}><path d="M2 9l6-7M16 7l-3-5M2 9a3 3 0 1 0 6 2 3 3 0 0 0-6-2zM8 11l3-2a3 3 0 1 0 5-2" stroke="#333" strokeWidth="1.300" /></Svg>
        <Svg w={12} box="0 0 12 18" h={16} className="ml-[7px]"><path d="M4.500 12C2 8 2 4 6 4s4 4 1.500 8v3h-3z" stroke="#2a7fcf" fill="#e8f3fd" /></Svg>
        <Chevron d="M7 1L3 5l4 4" sw={2} className="ml-[9px] text-[#444]" />
        <span className="flex-1" />
        <span className="h-full w-[17px] bg-[#ccc]" />
        <span className="flex-1" />
        <Chevron d="M3 1l4 4-4 4" sw={2} className="text-[#444]" />
        <Svg w={10} box="0 0 10 10" className="ml-[11px] self-end"><path d="M0 8.500h9M3 5.500h6M6 2.500h3" strokeDasharray="2 1" strokeWidth="2" stroke="#bbb" /></Svg>
      </div>
    </main>
  );
}

/* ---------- properties palette ---------- */

const PROPERTIES = [
  {
    title: 'Graphismes',
    rows: [
      { name: 'Remplacement...', button: 'Modifier...' },
      { name: 'Echelle', value: ' 1 : 100', off: true },
    ],
  },
  {
    title: "Données d'identification",
    rows: [
      { name: 'Dépendance', value: 'Indépendant', off: true },
      { name: 'Référencement ...', off: true },
      { name: 'Référencement ...', off: true },
      { name: 'Révision actuell...', check: false, off: true },
      { name: 'Révision actuell...', off: true },
      { name: 'Révision actuell...', off: true },
      { name: 'Date de révision...', off: true },
      { name: 'Description de l...', off: true },
      { name: 'Révision actuelle', off: true },
      { name: 'Approuvé par', value: 'Approver' },
      { name: 'Conçu par', value: 'Designer' },
      { name: 'Vérifié par', value: 'JLH' },
      { name: 'Dessiné par', value: 'SM' },
      { name: 'Numéro de la f...', value: 'A102' },
      { name: 'Nom de la feuille', value: 'Plans' },
      { name: 'Date de fin de l...', value: '07/24/12' },
      { name: 'Figure dans la li...', check: true },
      { name: 'Révisions sur fe...', button: 'Modifier...' },
    ],
  },
  {
    title: 'Autre',
    rows: [
      { name: 'Chemin du fich...', value: 'C:\\Program Files...', off: true },
      { name: 'Quadrillage de ...', value: '<Aucun>' },
    ],
  },
];

function PropertyValue({ row }) {
  if (row.button) {
    return <button className="block h-[16px] w-full border border-[#a9a9a9] bg-[#e1e1e1] leading-[14px]">{row.button}</button>;
  }
  if (row.check !== undefined) {
    return (
      <span className="relative block h-[13px] w-[13px]">
        <input
          type="checkbox"
          aria-label={row.name}
          defaultChecked={row.check}
          disabled={row.off}
          className="block h-[13px] w-[13px] appearance-none border border-[#333] bg-white disabled:border-[#ccc]"
        />
        {row.check && (
          <Svg w={13} box="0 0 13 13" className="pointer-events-none absolute inset-0"><path d="M3 6.500l2.500 3 5-6" stroke="#333" strokeWidth="1.300" /></Svg>
        )}
      </span>
    );
  }
  return <span className="whitespace-pre">{row.value}</span>;
}

function Properties() {
  return (
    <aside className="flex w-[218px] shrink-0 flex-col bg-[#eee] pl-[2px]">
      <h2 className="h-[20px] pl-[3px] leading-[21px] text-[#333]">Propriétés</h2>
      <button className="flex h-[71px] items-center border border-[#d0d0d0] bg-[#f0f0f0] px-[2px] text-left leading-[16px] text-[#333]">
        <span className="flex h-[66px] w-[66px] items-center justify-center border border-[#ccc]">
          <Icon name="sheet" w={36} className="text-[#333]" />
        </span>
        <span className="ml-[5px] flex-1">Feuille<br />Sheet</span>
        <Caret className="h-[4px] w-[7px]" />
      </button>
      <div className="flex h-[24px] items-center">
        <span className="relative block">
          <select aria-label="Type de feuille" className="h-[22px] w-[98px] appearance-none border border-[#adadad] bg-[#e1e1e1] px-[3px] leading-[18px]">
            <option>Feuille: Plans</option>
          </select>
          <Chevron className="pointer-events-none absolute right-[4px] top-[6px] text-[#555]" />
        </span>
        <button className="ml-[5px] flex items-center gap-[4px] whitespace-nowrap">
          <Svg w={18}><path d="M1.500 3.500l2-2h4v5h-6zM9.500 3.500l2-2h5v5h-7zM1.500 9.500l1-1h5v7h-6z" stroke="#444" /><rect x="9.500" y="8.500" width="7" height="8" fill="#fff" stroke="#2b62a8" /><path d="M11 10.500h4M11 13.500h1M13 14.500h2" stroke="#2b62a8" /></Svg>
          Modifier le type
        </button>
      </div>
      <div className="flex-1 bg-white">
        <table className="w-full table-fixed border-separate border-spacing-0">
          <colgroup><col className="w-[103px]" /><col /><col className="w-[12px]" /></colgroup>
          {PROPERTIES.map((section) => (
            <tbody key={section.title}>
              <tr className="h-[18px] bg-[#dcdcdc]">
                <th colSpan="2" className="p-0 pl-[3px] text-left font-normal leading-[17px]">{section.title}</th>
                <td className="p-0">
                  <Svg w={8} h={10} box="0 0 8 10"><path d="M1 4.500l2.500-3 2.500 3M1 8.500l2.500-3 2.500 3" stroke="#222" strokeWidth="1.300" /></Svg>
                </td>
              </tr>
              {section.rows.map((row, i) => (
                <tr key={i} className={`h-[18px] ${row.off ? 'text-[#808080]' : 'text-black'}`}>
                  <td className="truncate border-b border-r border-dotted border-[#555] p-0 pl-[8px] leading-[17px]">{row.name}</td>
                  <td className={`overflow-hidden border-b border-r border-dotted border-[#555] p-0 leading-[17px] ${row.button ? 'pl-px' : 'pl-[2px]'}`}><PropertyValue row={row} /></td>
                  <td className="border-b border-r border-dotted border-[#555] p-0" />
                </tr>
              ))}
            </tbody>
          ))}
        </table>
      </div>
      <div className="flex h-[28px] items-center justify-between pl-[3px] pr-[2px]">
        <a href="#aide" className="text-[#1c66b8] underline">Aide des propriétés</a>
        <button disabled className="h-[21px] w-[73px] border border-[#bfbfbf] bg-[#ccc] text-[#888]">Appliquer</button>
      </div>
    </aside>
  );
}

/* ---------- status bar ---------- */

function StatusSelect({ label, value }) {
  return (
    <span className="relative block">
      <select aria-label={label} className="block h-[18px] w-[204px] appearance-none border border-[#e4e4e4] bg-white px-[2px] leading-[16px] text-[#777]">
        <option>{value}</option>
      </select>
      <Chevron className="pointer-events-none absolute right-[2px] top-[5px] text-[#aaa]" />
    </span>
  );
}

function StatusBar() {
  return (
    <footer className="flex h-[24px] items-center bg-[#ccc] text-[#222]">
      <span className="w-[827px] pl-[2px]">Prêt</span>
      <span className="h-[22px] w-px bg-[#ddd]" />
      <Svg w={17} className="ml-[6px] mr-[7px]">
        <path d="M1 9l4-2V3l4-2 4 2v4l4 2v8h-4v-5h-2v5H8v-5H6v5H1z" fill="#9a9a9a" stroke="#eee" />
        <path d="M6 4h5M9 2v6" stroke="#eee" />
      </Svg>
      <StatusSelect label="Sous-projet actif" value="" />
      <Svg w={17} className="ml-[8px] mr-[3px]"><path d="M5 1h11v5H5zM1 17l3-6 4-1 4-4h2l-5 7v4z" fill="#9a9a9a" stroke="#eee" /><path d="M7 3.500h7" stroke="#eee" /></Svg>
      <span>:0</span>
      <span className="ml-[24px] h-[16px] w-[16px] rounded-[2px] bg-[#9e9e9e]" />
      <Svg w={17} className="ml-[9px] mr-[8px]"><path d="M2 1h14v15H2z" fill="#9a9a9a" stroke="none" /><path d="M1 12h6V8l5 5-5 5M16 10v7h-5" stroke="#eee" /></Svg>
      <StatusSelect label="Variante" value="Modèle de base" />
      <div className="ml-auto flex items-center gap-[9px] pr-[65px] text-[#9a9a9a]">
        <Svg w={17}><path d="M1 3l4-2 4 2 4-2 4 2-2 5-4 1v7l-4-4V9L2 7z" fill="currentColor" stroke="#e4e4e4" strokeDasharray="2 2" /></Svg>
        <Svg w={17}><path d="M1 12l10-10 5 2v12H1z" fill="currentColor" stroke="#e4e4e4" strokeDasharray="2 2" /></Svg>
        <Svg w={17}><path d="M3 2h9v5l3 3v3H9v4l-1-4H3v-3l2-2z" fill="currentColor" stroke="#e4e4e4" strokeDasharray="2 2" /></Svg>
        <Svg w={17}><path d="M2 3h10l4-2-2 8 2 7H2z" fill="currentColor" stroke="#e4e4e4" strokeDasharray="2 2" /></Svg>
        <Svg w={17}><path d="M5 1v8M1 5h8M8 7l1 9 2-2 2 3 2-1-2-3h3z" fill="#aaa" stroke="#eee" /></Svg>
        <Svg w={16}><circle cx="9" cy="9" r="6" strokeWidth="3" strokeDasharray="3 1.700" /></Svg>
        <span className="flex items-center text-[#222]">
          <Svg w={17}><path d="M1 2h16l-6 7v6l-4 2V9z" fill="#e6e9ee" stroke="#444" /><path d="M9 9v6" stroke="#7c8aa0" strokeWidth="2" /></Svg>
          :0
        </span>
      </div>
    </footer>
  );
}

/* ---------- revisions dialog ---------- */

const COLUMNS = [
  ['Ordre', 'w-[52px]'],
  ['Numérotation', 'w-[84px]'],
  ['Date', 'w-[66px]'],
  ['Description', 'w-[106px]'],
  ['Diffusé', 'w-[66px]'],
  ['Remis à', 'w-[65px]'],
  ['Diffusé par', 'w-[69px]'],
  ['Afficher', ''],
];

const REVISIONS = [
  { order: 1, date: '23/04/2018', text: 'Modif étage', selected: true },
  { order: 2, date: '24/04/2018', text: 'modif RDC' },
];

function RevisionTable() {
  const cell = 'overflow-hidden whitespace-nowrap border-b border-r border-dotted border-[#777] p-0 pl-[2px]';
  return (
    <div className="h-[426px] w-[700px] shrink-0 border-b-2 border-l border-r-2 border-t border-b-white border-l-[#777] border-r-white border-t-[#888] bg-white">
      <table className="h-full w-full table-fixed border-separate border-spacing-0">
        <colgroup>{COLUMNS.map(([name, width]) => <col key={name} className={width} />)}</colgroup>
        <thead>
          <tr className="h-[20px] bg-[#efefef]">
            {COLUMNS.map(([name]) => (
              <th key={name} className="whitespace-nowrap border-b border-r border-black p-0 font-normal leading-[18px]">{name}</th>
            ))}
          </tr>
        </thead>
        <tbody>
          {REVISIONS.map((rev) => (
            <tr key={rev.order} className={`h-[18px] leading-[16px] ${rev.selected ? 'bg-black text-white' : ''}`}>
              <th
                scope="row"
                className={`bg-[#efefef] p-0 font-normal text-black ${rev.selected ? 'border border-dotted border-black' : 'border-b border-r border-black'}`}
              >
                {rev.order}
              </th>
              <td className={cell}>Alphanumériq</td>
              <td className={cell}>{rev.date}</td>
              <td className={cell}>{rev.text}</td>
              <td className={cell}>
                <input
                  type="checkbox"
                  aria-label={`Diffusé ${rev.order}`}
                  className={`mx-auto block h-[13px] w-[13px] appearance-none border ${rev.selected ? 'border-white bg-black' : 'border-[#333] bg-white'}`}
                />
              </td>
              <td className={cell} />
              <td className={cell} />
              <td className={cell}>Nuage et étiquette</td>
            </tr>
          ))}
          <tr>
            {COLUMNS.map(([name], i) => (
              <td key={name} className={i === 0 ? 'border-b border-r border-black bg-[#efefef]' : cell} />
            ))}
          </tr>
        </tbody>
      </table>
    </div>
  );
}

function DialogButton({ children, disabled, primary, className = '' }) {
  return (
    <button
      disabled={disabled}
      className={`h-[22px] bg-[#e1e1e1] leading-[18px] disabled:border-[#bfbfbf] disabled:bg-[#ccc] disabled:text-[#858585] ${primary ? 'border-2 border-[#1274c4]' : 'border border-[#adadad]'} ${className}`}
    >
      {children}
    </button>
  );
}

function Group({ title, className = '', children }) {
  return (
    <fieldset className={`w-[157px] border border-[#dcdcdc] ${className}`}>
      <legend className="ml-[5px] px-[2px] leading-[14px]">{title}</legend>
      {children}
    </fieldset>
  );
}

function Radio({ label, checked }) {
  return (
    <label className="flex h-[23px] items-center gap-[2px]">
      <input
        type="radio"
        name="numerotation"
        defaultChecked={checked}
        className="h-[13px] w-[13px] appearance-none rounded-full border border-[#2a79b5] bg-white checked:border-[#333] checked:bg-[#333] checked:shadow-[inset_0_0_0_2px_#fff]"
      />
      {label}
    </label>
  );
}

function RevisionsDialog() {
  return (
    <div
      role="dialog"
      aria-label="Révisions et Revues des feuilles"
      className="absolute left-[505px] top-[250px] w-[910px] border border-[#2a79b5] bg-[#efefef] text-black shadow-[0_6px_20px_rgba(0,0,0,0.4)]"
    >
      <div className="flex h-[30px] items-center bg-white pl-[8px] pr-[16px]">
        <h2 className="flex-1">Révisions et Revues des feuilles</h2>
        <button aria-label="Aide" className="mr-[36px] text-[13px] font-semibold">?</button>
        <button aria-label="Fermer">
          <Svg w={13} box="0 0 13 13"><path d="M1.500 1.500l10 10M11.500 1.500l-10 10" strokeWidth="1.200" /></Svg>
        </button>
      </div>
      <div className="flex gap-[14px] pl-[12px] pt-[16px]">
        <RevisionTable />
        <div className="flex flex-col">
          <div className="flex flex-col gap-[10px] pl-[6px]">
            <DialogButton className="w-[154px]">Ajouter</DialogButton>
            <DialogButton className="w-[154px]">Supprimer</DialogButton>
          </div>
          <div className="mt-[9px] flex flex-col gap-[8px]">
            <Group title="Numérotation" className="h-[68px]">
              <div className="pl-[13px] pt-[2px]">
                <Radio label="Par projet" />
                <Radio label="Par feuille" checked />
              </div>
            </Group>
            <Group title="Ligne" className="h-[140px]">
              <div className="flex flex-col gap-[7px] px-[14px] pt-[5px]">
                <DialogButton disabled>Faire monter</DialogButton>
                <DialogButton>Faire descendre</DialogButton>
                <DialogButton disabled>Fusionner vers le haut</DialogButton>
                <DialogButton>Fusionner vers le bas</DialogButton>
              </div>
            </Group>
            <Group title="Options de numérotation" className="h-[80px]">
              <div className="flex flex-col gap-[7px] px-[14px] pt-[5px]">
                <DialogButton>Numérique...</DialogButton>
                <DialogButton>Alphanumérique...</DialogButton>
              </div>
            </Group>
            <Group title="Longueur de l'arc" className="h-[49px]">
              <div className="px-[15px] pt-[4px]">
                <input
                  aria-label="Longueur de l'arc"
                  defaultValue="20.0"
                  className="block h-[24px] w-full border border-[#777] bg-white px-[5px] pb-[4px] text-right outline-none"
                />
              </div>
            </Group>
          </div>
        </div>
      </div>
      <div className="mt-[20px] flex justify-end gap-[8px] pb-[16px] pr-[25px]">
        <DialogButton primary className="w-[103px]">OK</DialogButton>
        <DialogButton className="w-[103px]">Annuler</DialogButton>
        <DialogButton disabled className="w-[103px]">Appliquer</DialogButton>
      </div>
      <Svg w={9} box="0 0 9 9" className="absolute bottom-px right-[2px]"><path d="M0 8h9M3 5h6M6 2h3" stroke="#bbb" strokeWidth="2" strokeDasharray="2 1" /></Svg>
    </div>
  );
}

/* ---------- instruction callout ---------- */

function Callout() {
  return (
    <>
      <div className="absolute left-[1244px] top-[378px] h-[23px] w-[134px] rounded-[2px] border-[5px] border-[#f70000]" />
      <svg width="232" height="108" viewBox="0 0 232 108" className="absolute left-[1016px] top-[386px]" aria-hidden="true">
        <path d="M230 1L0 108h50z" fill="#2a7fbb" />
      </svg>
      <div className="absolute left-[866px] top-[493px] flex h-[80px] w-[250px] items-center justify-center bg-[#2a7fbb] text-center font-['Liberation_Sans',Arial,sans-serif] text-[18px] leading-[21px] text-white">
        <p>Cliquer sur [Par projet]<br />bouton radio</p>
      </div>
    </>
  );
}

export default function App() {
  return (
    <div className="relative flex h-screen flex-col overflow-hidden bg-[#eee] font-['Open_Sans','Noto_Sans',sans-serif] text-[11px] text-black">
      <TitleBar />
      <TabBar />
      <Ribbon />
      <QuickAccess />
      <div className="h-[28px] shrink-0 border-b-2 border-[#ccc] bg-[#eee]" />
      <div className="flex min-h-0 flex-1">
        <ProjectBrowser />
        <DrawingArea />
        <Properties />
      </div>
      <StatusBar />
      <RevisionsDialog />
      <Callout />
    </div>
  );
}
